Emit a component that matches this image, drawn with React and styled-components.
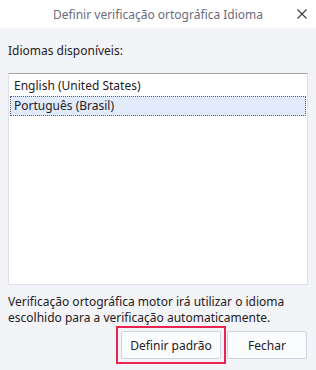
import React, { useState } from 'react';
import styled, { createGlobalStyle } from 'styled-components';

const GlobalStyle = createGlobalStyle`
  html, body {
    margin: 0;
    padding: 0;
    background: #f3f4f7;
  }
  * {
    box-sizing: border-box;
  }
`;

const Window = styled.div`
  width: 316px;
  height: 370px;
  display: flex;
  flex-direction: column;
  background: #f3f4f7;
  font-family: 'Noto Sans', 'Open Sans', sans-serif;
  font-size: 12px;
  color: #1f2023;
`;

const TitleBar = styled.div`
  height: 28px;
  background: #ffffff;
  display: grid;
  grid-template-columns: 28px 1fr 28px;
  align-items: center;
`;

const Title = styled.div`
  grid-column: 2;
  text-align: center;
  color: #6c6c7c;
  font-size: 12px;
`;

const CloseButton = styled.button`
  grid-column: 3;
  border: none;
  background: transparent;
  padding: 0;
  height: 28px;
  display: flex;
  align-items: center;
  justify-content: center;
`;

const Body = styled.div`
  flex: 1;
  display: flex;
  flex-direction: column;
  padding: 15px 8px 10px 8px;
`;

const Label = styled.label`
  line-height: 16px;
  margin-bottom: 14px;
`;

const ListBox = styled.div`
  height: 212px;
  background: #ffffff;
  border: 1px solid #dfe1e6;
  border-top-color: #a3a5aa;
  padding: 2px 1px;
`;

const Item = styled.div`
  height: 20px;
  line-height: 18px;
  padding: 0 3px;
  border: 1px dotted ${(p) => (p.$selected ? '#5b5e66' : 'transparent')};
  background: ${(p) => (p.$selected ? '#e1ebfb' : 'transparent')};
  cursor: default;
`;

const Description = styled.p`
  margin: 9px 0 0 0;
  line-height: 16px;
`;

const ButtonRow = styled.div`
  display: flex;
  justify-content: flex-end;
  align-items: center;
  gap: 6px;
  margin-top: 5px;
  padding-right: 1px;
`;

// red annotation frame drawn around the default button
const HighlightFrame = styled.div`
  display: flex;
  margin: -5px;
  padding: 3px;
  border: 2px solid #ec2350;
`;

const Button = styled.button`
  width: ${(p) => p.$width}px;
  height: 28px;
  background: #fbfcfd;
  border: 1px solid #cdd4e1;
  border-radius: 2px;
  font-family: inherit;
  font-size: 12px;
  color: #1f2023;
`;

const languages = ['English (United States)', 'Português (Brasil)'];

export default function App() {
  const [selected, setSelected] = useState(1);

  return (
    <Window>
      <GlobalStyle />
      <TitleBar>
        <Title>Definir verificação ortográfica Idioma</Title>
        <CloseButton aria-label="Fechar">
          <svg width="10" height="10" viewBox="0 0 10 10">
            <path d="M0.5 0.5 L9.5 9.5 M9.5 0.5 L0.5 9.5" stroke="#3a3a3a" strokeWidth="1.1" fill="none" />
          </svg>
        </CloseButton>
      </TitleBar>
      <Body>
        <Label>Idiomas disponíveis:</Label>
        <ListBox>
          {languages.map((lang, i) => (
            <Item key={lang} $selected={i === selected} onClick={() => setSelected(i)}>
              {lang}
            </Item>
          ))}
        </ListBox>
        <Description>
          Verificação ortográfica motor irá utilizar o idioma escolhido para a verificação automaticamente.
        </Description>
        <ButtonRow>
          <HighlightFrame>
            <Button $width={100}>Definir padrão</Button>
          </HighlightFrame>
          <Button $width={80}>Fechar</Button>
        </ButtonRow>
      </Body>
    </Window>
  );
}
